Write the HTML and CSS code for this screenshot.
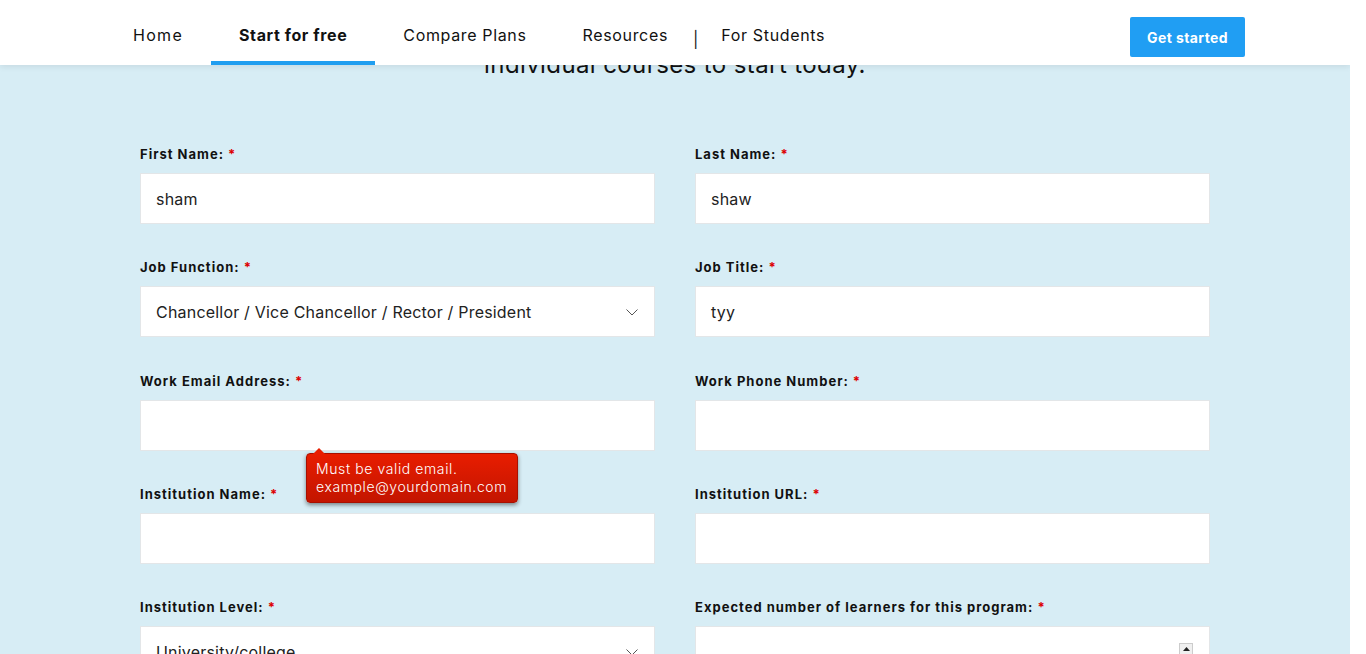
FILE: index.html
```html
<!DOCTYPE html>
<html lang="en">
<head>
<meta charset="utf-8">
<title>Start for free</title>
<link rel="stylesheet" href="styles.css">
</head>
<body>
<div class="page">
  <header class="topbar">
    <nav class="nav">
      <a class="nav-item">Home</a>
      <a class="nav-item active">Start for free</a>
      <a class="nav-item">Compare Plans</a>
      <a class="nav-item">Resources</a>
      <span class="nav-sep">|</span>
      <a class="nav-item">For Students</a>
    </nav>
    <a class="cta">Get started</a>
  </header>

  <main class="main">
    <h2 class="lead">individual courses to start today.</h2>

    <form class="form">
      <div class="field">
        <label class="label">First Name: <span class="req">*</span></label>
        <div class="input">sham</div>
      </div>
      <div class="field">
        <label class="label">Last Name: <span class="req">*</span></label>
        <div class="input">shaw</div>
      </div>

      <div class="field">
        <label class="label">Job Function: <span class="req">*</span></label>
        <div class="input select">Chancellor / Vice Chancellor / Rector / President
          <svg class="chev" width="12" height="7" viewBox="0 0 12 7"><path d="M0.5 0.5 L6 6 L11.5 0.5" fill="none" stroke="#555" stroke-width="1"/></svg>
        </div>
      </div>
      <div class="field">
        <label class="label">Job Title: <span class="req">*</span></label>
        <div class="input">tyy</div>
      </div>

      <div class="field">
        <label class="label">Work Email Address: <span class="req">*</span></label>
        <div class="input"></div>
        <div class="tip">
          <span class="tip-arrow"></span>
          Must be valid email.<br>example@yourdomain.com
        </div>
      </div>
      <div class="field">
        <label class="label">Work Phone Number: <span class="req">*</span></label>
        <div class="input"></div>
      </div>

      <div class="field">
        <label class="label">Institution Name: <span class="req">*</span></label>
        <div class="input"></div>
      </div>
      <div class="field">
        <label class="label">Institution URL: <span class="req">*</span></label>
        <div class="input"></div>
      </div>

      <div class="field">
        <label class="label">Institution Level: <span class="req">*</span></label>
        <div class="input select"><span class="val">University/college</span>
          <svg class="chev" width="12" height="7" viewBox="0 0 12 7"><path d="M0.5 0.5 L6 6 L11.5 0.5" fill="none" stroke="#555" stroke-width="1"/></svg>
        </div>
      </div>
      <div class="field">
        <label class="label">Expected number of learners for this program: <span class="req">*</span></label>
        <div class="input number">
          <span class="spin"><svg width="7" height="4" viewBox="0 0 7 4"><path d="M0 4 L3.5 0 L7 4 Z" fill="#222"/></svg></span>
        </div>
      </div>
    </form>
  </main>
</div>
</body>
</html>
```

FILE: styles.css
```css
html, body {
  margin: 0;
  padding: 0;
  background: #ffffff;
  overflow: hidden;
}

body {
  font-family: "Inter", "Open Sans", "Liberation Sans", sans-serif;
  color: #111;
}

.page {
  position: relative;
  width: 1350px;
  height: 654px;
  background: #d7edf5;
  overflow: hidden;
}

.topbar {
  position: absolute;
  top: 0;
  left: 0;
  right: 0;
  height: 65px;
  background: #fff;
  box-shadow: 0 2px 6px rgba(0, 0, 0, 0.08);
  display: flex;
  align-items: stretch;
  justify-content: space-between;
  padding: 0 105px 0 105px;
  box-sizing: border-box;
  z-index: 5;
}

.nav {
  display: flex;
  align-items: stretch;
}

.nav-item {
  display: flex;
  align-items: center;
  padding: 10px 28px 1px;
  font-size: 16px;
  font-weight: 400;
  letter-spacing: 0.65px;
  color: #111;
  border-bottom: 4px solid transparent;
  box-sizing: border-box;
}

.nav-item:first-child {
  letter-spacing: 1.3px;
}

.nav-item.active {
  font-weight: 700;
  border-bottom-color: #209ef0;
  letter-spacing: 0.6px;
}

.nav-sep {
  display: flex;
  align-items: center;
  font-size: 16px;
  color: #222;
  padding-top: 12px;
  margin-left: -3px;
  margin-right: -5px;
}

.cta {
  align-self: flex-start;
  margin-top: 17px;
  width: 115px;
  height: 40px;
  background: #209ef3;
  color: #fff;
  font-weight: 700;
  font-size: 14px;
  letter-spacing: 0.4px;
  display: flex;
  align-items: center;
  justify-content: center;
  border-radius: 2px;
}

.main {
  padding-top: 50px;
}

.lead {
  margin: 0;
  text-align: center;
  font-size: 24px;
  font-weight: 400;
  line-height: 30px;
  color: #111;
  letter-spacing: 0.4px;
}

.form {
  width: 1070px;
  margin: 64px auto 0;
  display: grid;
  grid-template-columns: 515px 515px;
  column-gap: 40px;
  row-gap: 33.25px;
}

.field {
  position: relative;
  display: flex;
  flex-direction: column;
}

.label {
  font-size: 13px;
  font-weight: 700;
  line-height: 20px;
  color: #111;
  letter-spacing: 1px;
  margin-bottom: 9px;
}

.req {
  color: #d00;
  margin-left: 0;
}

.input {
  position: relative;
  height: 51px;
  box-sizing: border-box;
  background: #fff;
  border: 1px solid #e3e6e8;
  padding: 0 15px;
  display: flex;
  align-items: center;
  font-size: 16px;
  color: #222;
  letter-spacing: 0.2px;
}

.select .chev {
  position: absolute;
  right: 16px;
  top: 22px;
}

.spin {
  position: absolute;
  right: 16px;
  top: 16px;
  width: 14px;
  height: 12px;
  box-sizing: border-box;
  background: #f0f0f0;
  border: 1px solid #ccc;
  display: flex;
  align-items: center;
  justify-content: center;
}

.tip {
  position: absolute;
  left: 166px;
  top: 82px;
  width: 212px;
  height: 50px;
  box-sizing: border-box;
  padding: 6px 9px;
  background: linear-gradient(#e81d00, #c31500);
  border: 1px solid #a81000;
  border-radius: 4px;
  box-shadow: 0 2px 4px rgba(0, 0, 0, 0.45);
  color: #fff;
  font-size: 14px;
  font-weight: 300;
  line-height: 18px;
  letter-spacing: 0.6px;
  white-space: nowrap;
  z-index: 3;
}

.tip-arrow {
  position: absolute;
  left: 6px;
  top: -6px;
  width: 0;
  height: 0;
  border-left: 6px solid transparent;
  border-right: 6px solid transparent;
  border-bottom: 6px solid #e81d00;
}
```
